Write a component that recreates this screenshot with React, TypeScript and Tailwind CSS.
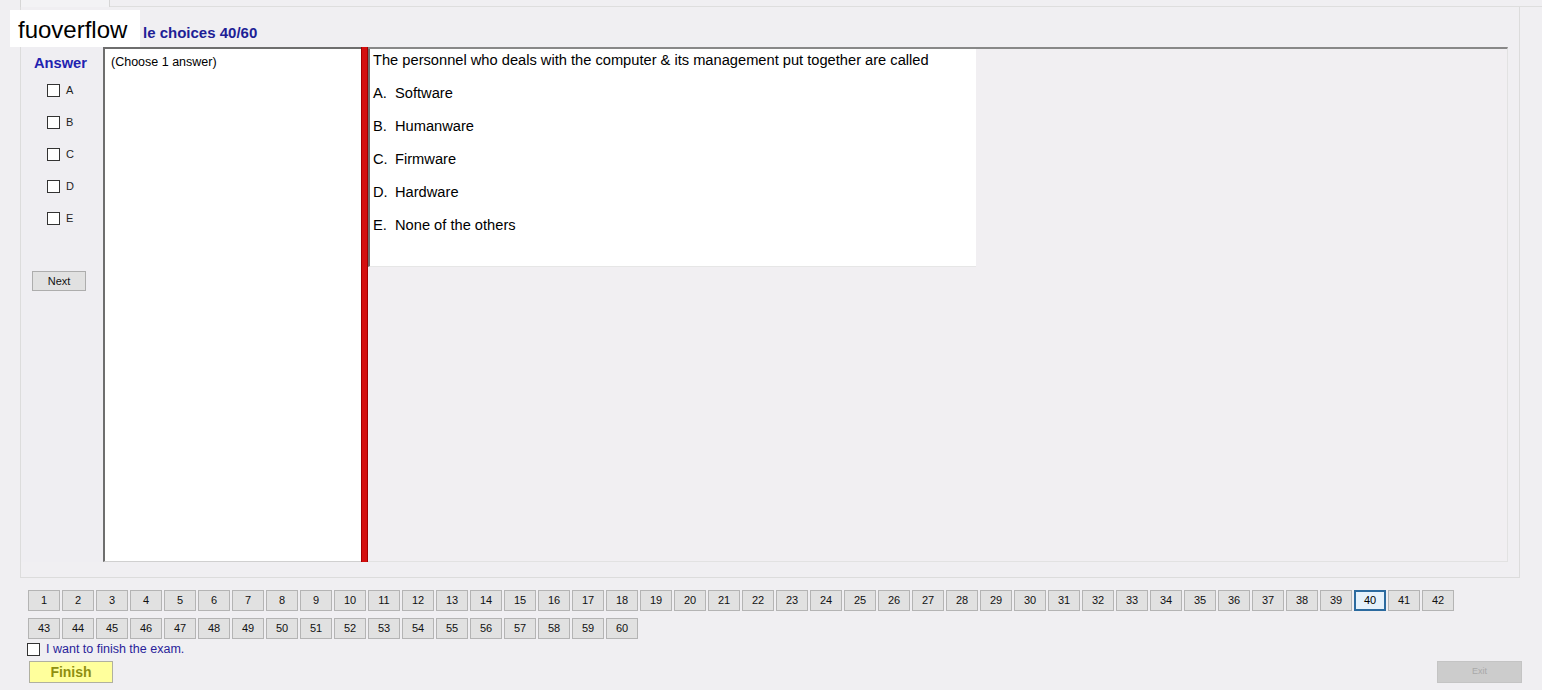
import React from 'react';

const font = { fontFamily: '"Liberation Sans", Arial, sans-serif' };

const options = [
  { key: 'A', text: 'Software' },
  { key: 'B', text: 'Humanware' },
  { key: 'C', text: 'Firmware' },
  { key: 'D', text: 'Hardware' },
  { key: 'E', text: 'None of the others' },
];

function NavButton({ n, current }: { n: number; current: boolean }) {
  return (
    <div
      className={
        current
          ? 'w-[32px] h-[21px] flex items-center justify-center text-[11px] text-black bg-[#e5f1fb] border-2 border-[#2b6a9f]'
          : 'w-[32px] h-[21px] flex items-center justify-center text-[11px] text-[#111] bg-[#e1e1e1] border border-[#b4b4b4]'
      }
    >
      {n}
    </div>
  );
}

export default function App() {
  const row1 = Array.from({ length: 42 }, (_, i) => i + 1);
  const row2 = Array.from({ length: 18 }, (_, i) => i + 43);

  return (
    <div className="w-[1542px] h-[690px] bg-[#f0eff2] relative overflow-hidden flex flex-col" style={font}>
      {/* tab header strip */}
      <div className="h-[7px] flex">
        <div className="ml-[20px] w-[90px] h-[7px] border-x border-[#d6d6d6] bg-[#f3f3f5]" />
        <div className="flex-1 border-b border-[#dedede]" />
      </div>

      {/* main tab page */}
      <div className="ml-[20px] mr-[22px] h-[571px] border-x border-b border-[#dcdcdc] flex flex-col">
        {/* title, its start is hidden under the watermark */}
        <div className="h-[40px] flex items-end pl-[122px] pb-[5px]">
          <span className="text-[15px] leading-[18px] font-bold text-[#1e1e96]">le choices 40/60</span>
        </div>

        <div className="flex h-[515px] mr-[11px]">
          {/* answer column */}
          <div className="w-[82px] flex flex-col bg-[#efeef2]">
            <div className="pl-[13px] pt-[7px] text-[14.67px] leading-[18px] font-bold text-[#2222b0]">Answer</div>
            <div className="flex flex-col gap-[19px] pl-[26px] pt-[12px]">
              {options.map((o) => (
                <div key={o.key} className="flex items-center gap-[6px] h-[13px]">
                  <div className="w-[13px] h-[13px] border border-[#333] bg-white" />
                  <span className="text-[11px] text-[#222]">{o.key}</span>
                </div>
              ))}
            </div>
            <div className="mt-[46px] ml-[11px] w-[54px] h-[20px] flex items-center justify-center text-[11px] text-[#111] bg-[#e1e1e1] border border-[#adadad]">
              Next
            </div>
          </div>

          {/* choose box */}
          <div className="w-[258px] bg-white border-l-2 border-t-2 border-[#6e6e6e] border-b border-b-[#d0d0d0] pl-[6px]">
            <span className="text-[12.5px] leading-[16px] text-black">(Choose 1 answer)</span>
          </div>

          {/* red divider */}
          <div className="w-[7px] bg-[#d40f0f] border-x border-[#a00000]" />

          {/* question area */}
          <div className="flex-1 border-t-2 border-[#888] border-r border-r-[#e2e2e2] border-b border-b-[#e2e2e2] bg-[#f1eff2]">
            <div className="w-[608px] h-[218px] bg-white border-l-2 border-[#6e6e6e] border-b border-b-[#e6e6e6] pl-[3px] pt-[1px] text-[14.67px] text-black">
              <div className="h-[20px] leading-[20px]">
                The personnel who deals with the computer &amp; its management put together are called
              </div>
              {options.map((o) => (
                <div key={o.key} className="mt-[13px] h-[20px] leading-[20px] flex">
                  <span className="w-[22px]">{o.key}.</span>
                  <span>{o.text}</span>
                </div>
              ))}
            </div>
          </div>
        </div>
      </div>

      {/* question navigation */}
      <div className="pl-[28px] pt-[12px] flex flex-col gap-[7px]">
        <div className="flex gap-[2px]">
          {row1.map((n) => (
            <NavButton key={n} n={n} current={n === 40} />
          ))}
        </div>
        <div className="flex gap-[2px]">
          {row2.map((n) => (
            <NavButton key={n} n={n} current={false} />
          ))}
        </div>
      </div>

      <div className="pl-[27px] mt-[2px] flex items-center gap-[6px] h-[16px]">
        <div className="w-[13px] h-[13px] border border-[#333] bg-white" />
        <span className="text-[12.5px] text-[#2a1e9a]">I want to finish the exam.</span>
      </div>

      <div className="mt-[4px] pl-[29px] pr-[20px] flex items-start justify-between">
        <div className="w-[84px] h-[22px] flex items-center justify-center bg-[#ffff9c] border border-[#b0b0a0] text-[14px] font-bold text-[#8f8f10]">
          Finish
        </div>
        <div className="w-[85px] h-[22px] flex items-center justify-center bg-[#cccccc] border border-[#c4c4c4] text-[9px] text-[#a9a9a9]">
          Exit
        </div>
      </div>

      {/* watermark */}
      <div className="absolute left-[10px] top-[10px] w-[130px] h-[37px] bg-white flex items-end pl-[8px] pb-[2px]">
        <span className="text-[24px] leading-[30px] text-black">fuoverflow</span>
      </div>
    </div>
  );
}
